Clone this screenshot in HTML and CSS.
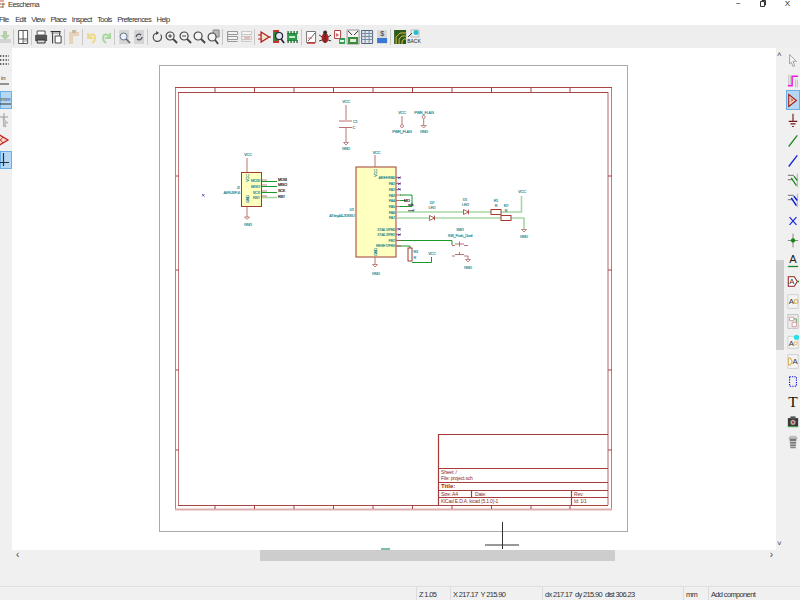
FILE: index.html
```html
<!DOCTYPE html>
<html lang="en">
<head>
    <meta charset="UTF-8">
    <title>Eeschema</title>
    <link rel="stylesheet" href="styles.css">
</head>
<body>
<div class="app">
    <div class="titlebar">
        <svg class="appicon" width="6" height="9" viewBox="0 0 6 9"><path d="M0 1h4M0 4h5M0 7h3" stroke="#c8503c" fill="none"/><path d="M3 3v5" stroke="#5a8a5a"/></svg>
        <span class="apptitle">Eeschema</span>
        <div class="winbtns">
            <span class="winbtn">&minus;</span>
            <svg class="winbtn" width="6" height="7" viewBox="0 0 6 7"><path d="M.5 1.5h4v5h-4zM2 1.500V.5h3.500v4.500h-1" fill="none" stroke="#333"/></svg>
            <span class="winbtn">X</span>
        </div>
    </div>
    <div class="menubar">
        <span class="menu first">File</span>
        <span class="menu">Edit</span>
        <span class="menu">View</span>
        <span class="menu">Place</span>
        <span class="menu">Inspect</span>
        <span class="menu">Tools</span>
        <span class="menu">Preferences</span>
        <span class="menu">Help</span>
    </div>

    <div class="toolbar">
        <svg class="tool first" viewBox="0 0 14 16"><path d="M1 10h12v4H1z" fill="#d4d4d4"/><path d="M5 2h4v4h3L7 11 2 6h3z" fill="#b4d0a6"/></svg>
        <i class="sep"></i>
        <svg class="tool" viewBox="0 0 14 16"><path d="M2.5 1.500h9v13h-9z" fill="#fff" stroke="#555"/><path d="M7 1v9M3 10h8M7 10v4" stroke="#555"/><path d="M8 12h3" stroke="#888"/></svg>
        <i class="sep"></i>
        <svg class="tool" viewBox="0 0 14 16"><path d="M3 2h8v4H3z" fill="#fff" stroke="#555"/><path d="M1 6h12v6H1z" fill="#555"/><path d="M3 11h8v3H3z" fill="#ddd" stroke="#333"/></svg>
        <svg class="tool" viewBox="0 0 14 16"><path d="M1.500 2.500h10M3.500 2.500v12M10.500 2.500v4" stroke="#333" fill="none"/><path d="M2 4h10" stroke="#888"/><path d="M6 7h6v7H6z" fill="#fff" stroke="#444"/></svg>
        <i class="sep"></i>
        <svg class="tool" viewBox="0 0 14 16"><path d="M2 3h10v12H2z" fill="#e6d2b8"/><path d="M5 1h4v3H5z" fill="#c8b89c"/><path d="M6 7h7v8H6z" fill="#eee"/></svg>
        <i class="sep"></i>
        <svg class="tool" viewBox="0 0 14 16"><path d="M3 4v5h5" fill="none" stroke="#ecd98a" stroke-width="2"/><path d="M4 8c2-4 6-3 6 1s-2 4-3 5" fill="none" stroke="#ecd98a" stroke-width="2"/></svg>
        <svg class="tool" viewBox="0 0 14 16"><path d="M11 4v5H6" fill="none" stroke="#a8d8a0" stroke-width="2"/><path d="M10 8c-2-4-6-3-6 1s2 4 3 5" fill="none" stroke="#a8d8a0" stroke-width="2"/></svg>
        <i class="sep"></i>
        <svg class="tool" viewBox="0 0 14 16"><path d="M2 1h10v14H2z" fill="#d4d4d4"/><circle cx="6.500" cy="7.500" r="3.500" fill="#eef" stroke="#678"/><path d="M9 10l4 4" stroke="#567" stroke-width="1.500"/></svg>
        <svg class="tool" viewBox="0 0 14 16"><path d="M2 1h10v14H2z" fill="#d4d4d4"/><path d="M4 8a3 3 0 0 1 5-2M10 8a3 3 0 0 1-5 2" fill="none" stroke="#556" stroke-width="1.300"/></svg>
        <i class="sep"></i>
        <svg class="tool" viewBox="0 0 14 16"><path d="M10.500 5.500a4.200 4.200 0 1 1-3-1.500" fill="none" stroke="#444" stroke-width="1.100"/><path d="M6 2l3 2-3 2z" fill="#444"/></svg>
        <svg class="tool" viewBox="0 0 14 16"><circle cx="6" cy="7" r="4" fill="#f4f4f4" stroke="#444" stroke-width="1.200"/><path d="M9 10l4 4" stroke="#444" stroke-width="1.800"/><path d="M4 7h4M6 5v4" stroke="#444"/></svg>
        <svg class="tool" viewBox="0 0 14 16"><circle cx="6" cy="7" r="4" fill="#f4f4f4" stroke="#444" stroke-width="1.200"/><path d="M9 10l4 4" stroke="#444" stroke-width="1.800"/><path d="M4 7h4" stroke="#444"/></svg>
        <svg class="tool" viewBox="0 0 14 16"><circle cx="6" cy="7" r="4" fill="#f4f4f4" stroke="#444" stroke-width="1.200"/><path d="M9 10l4 4" stroke="#444" stroke-width="1.800"/></svg>
        <svg class="tool" viewBox="0 0 14 16"><path d="M7 1h6v7H7z" fill="#bbb" stroke="#888"/><circle cx="6" cy="8" r="4" fill="#f4f4f4" stroke="#444" stroke-width="1.200"/><path d="M9 11l3 4" stroke="#444" stroke-width="1.800"/></svg>
        <i class="sep"></i>
        <svg class="tool" viewBox="0 0 14 16"><path d="M2.500 2.500h10v3h-10zM2.500 7.500h10v3h-10zM2.500 12.500h10M2.500 2.500v10" fill="#f4f4f4" stroke="#999"/></svg>
        <svg class="tool" viewBox="0 0 14 16"><path d="M2.500 2.500h10v3h-10zM2.500 7.500h10v3h-10zM2.500 12.500h10M2.500 2.500v10" fill="#f4f4f4" stroke="#c8c8c8"/><path d="M5 9h6" stroke="#e08080"/></svg>
        <i class="sep"></i>
        <svg class="tool" viewBox="0 0 14 16"><path d="M4 3l8 5-8 5z" fill="#f6e4d0" stroke="#b02020" stroke-width="1.300"/><path d="M1 6h3M1 10h3M12 8h2" stroke="#b02020"/></svg>
        <svg class="tool" viewBox="0 0 14 16"><path d="M2 1h6v13H2z" fill="#c83030"/><path d="M3 3h4v9H3z" fill="#2a8a3a"/><circle cx="8" cy="7" r="3.500" fill="#dfe8f0" stroke="#223" stroke-width="1.200"/><path d="M10 10l3 4" stroke="#223" stroke-width="1.600"/></svg>
        <svg class="tool" viewBox="0 0 14 16"><path d="M2 4h10v8H2z" fill="#2a9a4a"/><path d="M3 2v3M6 2v3M9 2v3M12 2v3M3 11v3M6 11v3M9 11v3M12 11v3" stroke="#1c6a30" stroke-width="1.300"/><path d="M4 7h6v2H4z" fill="#cfe8cf"/></svg>
        <i class="sep"></i>
        <svg class="tool" viewBox="0 0 14 16"><path d="M2.500 2.500h9v11h-9z" fill="#fff" stroke="#777"/><path d="M4 12l7-8" stroke="#666"/><path d="M3 14h8" stroke="#c03030" stroke-width="1.500"/><path d="M4 9h4" stroke="#d06060"/></svg>
        <svg class="tool" viewBox="0 0 14 16"><ellipse cx="7" cy="9" rx="3.500" ry="5" fill="#b02020"/><circle cx="7" cy="3.500" r="2" fill="#333"/><path d="M1 6l3 2M13 6l-3 2M1 12l3-1M13 12l-3-1" stroke="#333"/><path d="M7 5v9" stroke="#333"/></svg>
        <svg class="tool" viewBox="0 0 14 16"><path d="M2.500 1.500h6v8h-6z" fill="#fff" stroke="#b04040"/><path d="M4 4l3 2-3 2z" fill="#d06060"/><path d="M7 9h6v6H7z" fill="#3a9a5a"/><path d="M8 11h4v2H8z" fill="#dfd"/></svg>
        <svg class="tool" viewBox="0 0 14 16"><path d="M1 1h12v14H1z" fill="#f4f4f4" stroke="#999"/><path d="M2 2l4 4M12 2L8 6" stroke="#333"/><path d="M2 8h10v7H2z" fill="#3a8a3a"/><path d="M4 10h6v3H4z" fill="#dfeedd"/></svg>
        <svg class="tool" viewBox="0 0 14 16"><path d="M1.500 1.500h11v13h-11z" fill="#dfe6f0" stroke="#567"/><path d="M1 4.500h12M1 7.500h12M1 10.500h12M5 2v12M9 2v12" stroke="#7a8ba0"/></svg>
        <svg class="tool" viewBox="0 0 14 16"><path d="M2 1h10v14H2z" fill="#d8d8d8"/><text x="7" y="7" class="icon-text">$</text><path d="M2 9h10v5H2z" fill="#3a78d8"/></svg>
        <i class="sep"></i>
        <svg class="tool" viewBox="0 0 14 16"><path d="M1 1h12v14H1z" fill="#2e5a1e"/><path d="M3 15V8l4-4h6M6 15v-5l3-3h4M9 15v-3l2-2h2" stroke="#d8b840" fill="none"/></svg>
        <span class="tool backbtn">
            <svg viewBox="0 0 14 9" width="14" height="9"><path d="M4 1h8v7H4z" fill="#eee" stroke="#bbb"/><circle cx="9" cy="3.500" r="2.500" fill="#20c0d0"/><path d="M5 4L1 8" stroke="#444"/></svg>
            <span class="backlabel">BACK</span>
        </span>
    </div>

    <div class="main">
        <div class="lefttool">
            <div class="ltool"><svg viewBox="0 0 14 16"><path d="M0 4h9M0 8h9M0 12h9" stroke="#333" stroke-dasharray="1.300 1.500" stroke-width="1.300"/></svg></div>
            <div class="ltool"><svg viewBox="0 0 14 16"><text x="1" y="8" class="unit-text">in</text><path d="M0 12h9" stroke="#333"/></svg></div>
            <div class="ltool active"><svg viewBox="0 0 14 16"><text x="0.5" y="9" class="unit-text">mm</text><path d="M0 12h11" stroke="#333"/></svg></div>
            <div class="ltool"><svg viewBox="0 0 14 16"><path d="M4 1v14M0 5h8" stroke="#999"/><path d="M3 6l5 5H5l1 4-2-1z" fill="#ccc" stroke="#999" stroke-width=".5"/></svg></div>
            <div class="ltool"><svg viewBox="0 0 14 16"><path d="M-2 2l10 6-10 6z" fill="#f4d8c8" stroke="#c02020" stroke-width="1.300"/><path d="M-2 5l5 6M-2 11l5-6" stroke="#c02020" stroke-width=".8"/></svg></div>
            <div class="ltool active"><svg viewBox="0 0 14 16"><path d="M3.500 1v13M-1 10.500h10" stroke="#234" stroke-width="1.200"/></svg></div>
        </div>

        <div class="center">
            <svg class="sheet" viewBox="12 48 764 502" width="764" height="502">
                <!-- page + frame -->
                <rect class="page" x="159.5" y="65.5" width="468" height="466"/>
                <path class="frame-light" d="M175.5 87v423M178.5 92v413M611.5 87v423"/>
                <path class="frame-soft" d="M608 92v413M175 509.500h437"/>
                <path class="frame-dark" d="M175 87.500h437M178 92.500h430M178 505.500h430"/>
                <path class="tick" d="M215 87v5M254.5 87v5M294 87v5M333.5 87v5M373 87v5M412.5 87v5M452 87v5M491.5 87v5M531 87v5M570 87v5"/>
                <path class="tick" d="M215 505v4M254.5 505v4M294 505v4M333.5 505v4M373 505v4M412.5 505v4M452 505v4M491.5 505v4M531 505v4M570 505v4"/>
                <path class="tick" d="M176 176h3M176 270h3M176 370h3M176 450h3M608 176h4M608 270h4M608 370h4M608 450h4"/>

                <!-- title block -->
                <path class="tb" d="M438.5 505V434.500H608M438.5 468.500H608M438.5 482.500H608M438.5 490.500H608M438.5 497.500H608M471.5 490.500v7M571.5 490.500V505"/>
                <text class="tb-t" x="441" y="473.5">Sheet: /</text>
                <text class="tb-t" x="441" y="479.5">File: project.sch</text>
                <text class="tb-b" x="441" y="488">Title:</text>
                <text class="tb-t" x="441" y="495.5">Size: A4</text>
                <text class="tb-t" x="475" y="495.5">Date:</text>
                <text class="tb-t" x="574" y="495.5">Rev:</text>
                <text class="tb-t" x="441" y="502.5">KiCad E.D.A.  kicad (5.1.0)-1</text>
                <text class="tb-t" x="574" y="502.5">Id: 1/1</text>

                <!-- C1 -->
                <path class="pin" d="M346 105v15M339 121h13M339 127.500h13M346 128v14"/>
                <path class="gnd" d="M343.5 142.500h5l-2.500 2.500z"/>
                <text class="lbl m" x="346" y="103">VCC</text>
                <text class="lbl m" x="346" y="150">GND</text>
                <text class="lbl" x="353" y="123">C1</text>
                <text class="lbl" x="352.5" y="128.5">C</text>

                <!-- power flags -->
                <path class="pin" d="M402 116v8M423.700 119v6"/>
                <circle class="flag" cx="402" cy="126" r="1.500"/>
                <circle class="flag" cx="423.700" cy="117" r="1.500"/>
                <path class="gnd" d="M421.200 125.500h5l-2.500 2.500z"/>
                <text class="lbl m" x="402" y="113.5">VCC</text>
                <text class="lbl m" x="402" y="133">PWR_FLAG</text>
                <text class="lbl m" x="424" y="113.5">PWR_FLAG</text>
                <text class="lbl m" x="424" y="133">GND</text>

                <!-- AVR-ISP-6 -->
                <rect class="ic" x="241.5" y="172.5" width="20" height="34"/>
                <path class="pin" d="M247 158v14M247 207v10"/>
                <path class="gnd" d="M244.500 217h5l-2.500 2.500z"/>
                <path class="wire" d="M262 181.500h15M262 186.500h15M262 192.500h15"/>
                <path class="wire-soft" d="M262 197.500h15"/>
                <path class="stub" d="M262 180h5M262 185h5M262 191h5M262 196h5"/>
                <text class="lbl m" x="248" y="156">VCC</text>
                <text class="lbl m" x="248" y="226">GND</text>
                <text class="lbl e" x="240" y="189">J1</text>
                <text class="lbl e" x="240" y="193.5">AVR-ISP-6</text>
                <text class="lbl m" x="247" y="179.5" transform="rotate(-90 247 178)">VCC</text>
                <text class="lbl m" x="247" y="200.5" transform="rotate(-90 247 199)">GND</text>
                <text class="lbl e" x="260" y="182">MOSI</text>
                <text class="lbl e" x="260" y="188">MISO</text>
                <text class="lbl e" x="260" y="193.5">SCK</text>
                <text class="lbl e" x="260" y="199">RST</text>
                <text class="net" x="278" y="180.5">MOSI</text>
                <text class="net" x="278" y="186">MISO</text>
                <text class="net" x="278" y="192">SCK</text>
                <text class="net" x="278" y="197.5">RST</text>
                <path class="nc" d="M202 194l2.500 2.500M204.500 194l-2.500 2.500"/>

                <!-- ATtiny44 -->
                <rect class="ic" x="356" y="167" width="40" height="90"/>
                <path class="pin" d="M375 155v12M375 257v7"/>
                <path class="pin" d="M396 177.500h5M396 183.500h5M396 189.500h5M396 195h5M396 200.500h5M396 206.500h5M396 229h5M396 234.500h5"/>
                <path class="gnd" d="M372.500 264.500h5l-2.500 2.500z"/>
                <path class="nc" d="M398 176.500l2.500 2.500M400.500 176.500l-2.500 2.500M398 182.500l2.500 2.500M400.500 182.500l-2.500 2.500M398 188l2.500 2.500M400.500 188l-2.500 2.500M398 228l2.500 2.500M400.500 228l-2.500 2.500M398 233.500l2.500 2.500M400.500 233.500l-2.500 2.500"/>
                <text class="lbl m" x="376.5" y="153.5">VCC</text>
                <text class="lbl m" x="376" y="274.5">GND</text>
                <text class="lbl e" x="354" y="211">U1</text>
                <text class="lbl e" x="354.5" y="216.5">ATtiny44-20SSU</text>
                <text class="lbl m" x="375.5" y="174.5" transform="rotate(-90 375.500 173)">VCC</text>
                <text class="lbl m" x="375.5" y="253.5" transform="rotate(-90 375.500 252)">GND</text>
                <text class="lbl e" x="395" y="179">AREF/PA0</text>
                <text class="lbl e" x="395" y="185">PA1</text>
                <text class="lbl e" x="395" y="190.5">PA2</text>
                <text class="lbl e" x="395" y="196.5">PA3</text>
                <text class="lbl e" x="395" y="202">PA4</text>
                <text class="lbl e" x="395" y="207.5">PA5</text>
                <text class="lbl e" x="395" y="213.5">PA6</text>
                <text class="lbl e" x="395" y="219">PA7</text>
                <text class="lbl e" x="395" y="230.5">XTAL1/PB0</text>
                <text class="lbl e" x="395" y="236">XTAL2/PB1</text>
                <text class="lbl e" x="395" y="241.5">PB2</text>
                <text class="lbl e" x="395" y="247">RESET/PB3</text>

                <!-- nets on PA3..PA5 -->
                <path class="wire" d="M400 195h12v11.500h-12M400 200.500h5"/>
                <text class="net" x="404" y="201.5">MO</text>
                <text class="net" x="408" y="206">sck</text>
                <text class="net" x="408" y="211.5">scal</text>

                <!-- LED rows -->
                <path class="wire-soft" d="M397 212h124.500v-16M397 218h127v11"/>
                <path class="diode" d="M429.5 215.500l5 2.500-5 2.500zM434.500 215.500v5"/>
                <path class="diode" d="M463.5 209.500l5 2.500-5 2.500zM468.500 209.500v5"/>
                <rect class="res" x="491" y="209.5" width="10" height="5"/>
                <rect class="res" x="501" y="215.5" width="10" height="5"/>
                <path class="gnd" d="M521.5 229.500h5l-2.500 2.500z"/>
                <text class="lbl m" x="432" y="204">D2</text>
                <text class="lbl m" x="432" y="209">LED</text>
                <text class="lbl m" x="465" y="200.5">D1</text>
                <text class="lbl m" x="465.5" y="206">LED</text>
                <text class="lbl m" x="496" y="201.5">R1</text>
                <text class="lbl m" x="496" y="206.5">R</text>
                <text class="lbl m" x="506" y="207">R2</text>
                <text class="lbl m" x="506" y="212">R</text>
                <text class="lbl m" x="522" y="192.5">VCC</text>
                <text class="lbl m" x="524" y="237.5">GND</text>

                <!-- switch + reset -->
                <path class="wire" d="M397 240.500h55v4.500M397 246h13v2M412 262.500h19.500V257"/>
                <path class="pin" d="M396 240.500h5M396 246h5"/>
                <rect class="res" x="408" y="248" width="4" height="13"/>
                <path class="pin" d="M455 244h9M459.500 241.500v5M455 254.500h9M459.500 252v2.500M452 245.500h3M464 245.500h4M452 256h3M464 256h4M468 256v3"/>
                <path class="gnd" d="M465.5 259.500h5l-2.500 2.500z"/>
                <text class="lbl m" x="460" y="231">SW1</text>
                <text class="lbl m" x="460" y="237">SW_Push_Dual</text>
                <text class="lbl m" x="468" y="269">GND</text>
                <text class="lbl m" x="432" y="254.5">VCC</text>
                <text class="lbl" x="413.5" y="253">R3</text>
                <text class="lbl" x="413.5" y="259">R</text>

                <!-- cursor + bit of a part below the sheet -->
                <path class="cross" d="M502.5 522v27M485 545h34"/>
                <path class="blob" d="M381 549h9"/>
            </svg>
            <div class="hscroll">
                <span class="harrow left">&lsaquo;</span>
                <div class="hthumb"></div>
                <span class="harrow right">&rsaquo;</span>
            </div>
        </div>

        <div class="vscroll">
            <span class="varrow">&#708;</span>
            <div class="vthumb"></div>
            <span class="varrow bottom">&#709;</span>
        </div>

        <div class="righttool">
            <div class="rtool"><svg viewBox="0 0 14 18"><path d="M3 2l8 8H7l2 5-2 1-2-5-2 2z" fill="#f4f4f4" stroke="#999"/></svg></div>
            <div class="rtool"><svg viewBox="0 0 14 18"><path d="M1 15h5V4h7" fill="none" stroke="#f020e0" stroke-width="1.800"/><path d="M2 2v12M4 3v10M10 8v9M12 8v9" stroke="#bbb"/></svg></div>
            <div class="rtool active"><svg viewBox="0 0 14 18"><path d="M2 2l9 7-9 7z" fill="#f6d8c0" stroke="#a02020" stroke-width="1.300"/><path d="M4 6l3 4M4 11l3-4" stroke="#c04040" stroke-width=".8"/></svg></div>
            <div class="rtool"><svg viewBox="0 0 14 18"><path d="M7 1v9M2 10h10M4 13h6M6 16h2" stroke="#701818" stroke-width="1.300"/></svg></div>
            <div class="rtool"><svg viewBox="0 0 14 18"><path d="M2 16L12 3" stroke="#208820" stroke-width="1.500"/></svg></div>
            <div class="rtool"><svg viewBox="0 0 14 18"><path d="M2 16L12 3" stroke="#1020d8" stroke-width="1.500"/></svg></div>
            <div class="rtool"><svg viewBox="0 0 14 18"><path d="M1 3h7M1 8h6" stroke="#888" stroke-width="1.300"/><path d="M12 1v16" stroke="#aaa"/><path d="M5 6l6 9M8 4l4 5" stroke="#208820" stroke-width="1.500"/></svg></div>
            <div class="rtool"><svg viewBox="0 0 14 18"><path d="M1 3h7M1 8h6" stroke="#888" stroke-width="1.300"/><path d="M12 1v16" stroke="#aaa"/><path d="M5 6l6 9M8 4l4 5" stroke="#1020d8" stroke-width="1.800"/></svg></div>
            <div class="rtool"><svg viewBox="0 0 14 18"><path d="M3 5l8 9M11 5l-8 9" stroke="#1020d8" stroke-width="1.300"/></svg></div>
            <div class="rtool"><svg viewBox="0 0 14 18"><path d="M7 1v16M1 9h12" stroke="#777"/><circle cx="7" cy="9" r="2.500" fill="#108810"/></svg></div>
            <div class="rtool"><svg viewBox="0 0 14 18"><text x="7" y="12" class="big-text">A</text><path d="M1 16h12" stroke="#208820" stroke-width="1.500"/></svg></div>
            <div class="rtool"><svg viewBox="0 0 14 18"><path d="M1.500 3.500h7l3.500 5.500-3.500 5.500h-7z" fill="#fff" stroke="#902020" stroke-width="1.200"/><text x="5.500" y="12" class="mid-text">A</text><path d="M12 9h2" stroke="#208820" stroke-width="1.500"/></svg></div>
            <div class="rtool"><svg viewBox="0 0 14 18"><path d="M1 1h12v16H1z" fill="#f4f4f4" stroke="#ccc"/><text x="5" y="12" class="mid-text">A</text><circle cx="10.500" cy="9" r="2.200" fill="#fff" stroke="#d8a848" stroke-width="1.200"/></svg></div>
            <div class="rtool"><svg viewBox="0 0 14 18"><path d="M1 1h12v16H1z" fill="#f0eded" stroke="#bbb"/><path d="M3 4h5v4H3zM6 10h5v5H6z" fill="#fff" stroke="#d09090"/><path d="M8 6h3v4" fill="none" stroke="#50a050"/></svg></div>
            <div class="rtool"><svg viewBox="0 0 14 18"><path d="M1 3h12v14H1z" fill="#f4f4f4" stroke="#ccc"/><text x="5" y="14" class="mid-text">A</text><circle cx="10" cy="11" r="1.800" fill="#fff" stroke="#d8a848"/><circle cx="11" cy="4" r="3" fill="#20e0e8"/></svg></div>
            <div class="rtool"><svg viewBox="0 0 14 18"><path d="M1 1h12v16H1z" fill="#f4f4f4" stroke="#ccc"/><path d="M2 5h2l2 4-2 4H2z" fill="#fff" stroke="#d8a848" stroke-width="1.200"/><text x="9.500" y="12.500" class="mid-text">A</text></svg></div>
            <div class="rtool"><svg viewBox="0 0 14 18"><rect x="3" y="3.500" width="8" height="11" fill="none" stroke="#1010e0" stroke-width="1.300" stroke-dasharray="1.500 1.300"/></svg></div>
            <div class="rtool"><svg viewBox="0 0 14 18"><text x="7" y="15" class="t-text">T</text></svg></div>
            <div class="rtool"><svg viewBox="0 0 14 18"><path d="M1 5h12v10H1z" fill="#3a3a3a"/><path d="M4 3h6v3H4z" fill="#555"/><circle cx="7" cy="10" r="3" fill="#aaa"/><circle cx="7" cy="10" r="1.300" fill="#d02020"/><path d="M1 15h12" stroke="#40a040" stroke-width="1.300"/></svg></div>
            <div class="rtool"><svg viewBox="0 0 14 18"><path d="M3 3h8" stroke="#bbb" stroke-width="1.300"/><path d="M2 5h10" stroke="#888" stroke-width="1.300"/><path d="M3 6h8l-1 11H4z" fill="#777"/><path d="M3 9h8M3 12h8M4 15h6" stroke="#ddd"/></svg></div>
        </div>
    </div>

    <div class="spacer"></div>

    <div class="statusbar">
        <span class="cell c-msg"></span>
        <span class="cell c-zoom">Z 1.05</span>
        <span class="cell c-xy">X 217.17&nbsp; Y 215.90</span>
        <span class="cell c-d">dx 217.17&nbsp; dy 215.90&nbsp; dist 306.23</span>
        <span class="cell c-unit">mm</span>
        <span class="cell c-tool">Add component</span>
    </div>
</div>
</body>
</html>
```

FILE: styles.css
```css
body {
    margin: 0;
    overflow: hidden;
    background-color: #f0f0f0;
    font-family: "Liberation Sans", Arial, sans-serif;
    color: #222;
}
.app {
    width: 800px;
    height: 600px;
    display: flex;
    flex-direction: column;
    overflow: hidden;
}

/* title + menu */
.titlebar {
    height: 13px;
    background-color: #fff;
    display: flex;
    align-items: flex-start;
    font-size: 7.5px;
    line-height: 9px;
    letter-spacing: -0.55px;
}
.appicon {
    margin-right: 2px;
}
.apptitle {
    color: #333;
}
.winbtns {
    margin-left: auto;
    display: flex;
    align-items: flex-start;
    gap: 19px;
    padding-right: 10px;
    letter-spacing: 0;
}
.winbtn {
    font-size: 8px;
    line-height: 8px;
}
.menubar {
    height: 12px;
    background-color: #fff;
    display: flex;
    align-items: center;
    gap: 5.5px;
    font-size: 7.5px;
    letter-spacing: -0.6px;
    padding-left: 1px;
    color: #333;
}
.menu.first {
    margin-left: -2px;
    margin-right: 1px;
}

/* top toolbar */
.toolbar {
    height: 23px;
    background-color: #eeeeee;
    display: flex;
    align-items: center;
    flex: none;
}
.tool {
    width: 14.2px;
    height: 16px;
    flex: none;
    display: block;
}
.tool.first {
    margin-left: -2px;
}
.sep {
    width: 4px;
    height: 16px;
    flex: none;
    background: linear-gradient(#c8c8c8, #c8c8c8) no-repeat 1px 0 / 1px 100%;
}
.icon-text {
    font-size: 7px;
    text-anchor: middle;
    fill: #333;
}
.backbtn {
    display: flex;
    flex-direction: column;
    align-items: center;
}
.backlabel {
    font-size: 5px;
    line-height: 7px;
}

/* middle */
.main {
    height: 513px;
    flex: none;
    display: flex;
}
.lefttool {
    width: 12px;
    flex: none;
    padding-top: 2px;
    display: flex;
    flex-direction: column;
    overflow: hidden;
}
.ltool {
    height: 20px;
    display: flex;
    align-items: center;
    flex: none;
}
.ltool svg {
    width: 14px;
    height: 16px;
    flex: none;
    overflow: visible;
}
.ltool.active {
    background-color: #b5d7f5;
    box-shadow: inset 0 0 0 1px #6aaee8;
    height: 18px;
    margin: 1px 0;
}
.unit-text {
    font-size: 6px;
    fill: #333;
}
.center {
    width: 764px;
    flex: none;
    display: flex;
    flex-direction: column;
}
.sheet {
    display: block;
    background-color: #fff;
    flex: none;
}
.hscroll {
    height: 11px;
    flex: none;
    display: flex;
    align-items: stretch;
    position: relative;
}
.hthumb {
    width: 355px;
    margin-left: 248px;
    background-color: #cdcdcd;
}
.harrow {
    position: absolute;
    top: 0;
    font-size: 10px;
    line-height: 10px;
    color: #444;
}
.harrow.left {
    left: 4px;
}
.harrow.right {
    right: 3px;
}
.vscroll {
    width: 9px;
    flex: none;
    position: relative;
}
.varrow {
    position: absolute;
    left: 1px;
    top: 3px;
    font-size: 8px;
    line-height: 8px;
    color: #444;
}
.varrow.bottom {
    top: auto;
    bottom: 13px;
}
.vthumb {
    width: 8px;
    height: 90px;
    margin-top: 212px;
    background-color: #cdcdcd;
}
.righttool {
    width: 15px;
    flex: none;
    padding-top: 2px;
    padding-left: 1px;
    box-sizing: border-box;
    display: flex;
    flex-direction: column;
}
.rtool {
    height: 20.1px;
    display: flex;
    align-items: center;
    justify-content: center;
    flex: none;
}
.rtool svg {
    width: 12px;
    height: 17px;
    overflow: visible;
}
.rtool.active {
    background-color: #b5d7f5;
    box-shadow: inset 0 0 0 1px #6aaee8;
}
.big-text {
    font-size: 13px;
    text-anchor: middle;
    fill: #222;
}
.mid-text {
    font-size: 9px;
    text-anchor: middle;
    fill: #333;
}
.t-text {
    font-family: "Liberation Serif", serif;
    font-size: 18px;
    text-anchor: middle;
    fill: #111;
}

/* schematic */
.sheet text {
    font-family: "Liberation Sans", Arial, sans-serif;
}
.page {
    fill: none;
    stroke: #aaaaaa;
}
.frame-light {
    fill: none;
    stroke: #c87878;
}
.frame-soft {
    fill: none;
    stroke: #e0b0b0;
    stroke-width: 2;
}
.frame-dark {
    fill: none;
    stroke: #a84444;
}
.tick {
    stroke: #a44;
    fill: none;
}
.tb {
    fill: none;
    stroke: #a83a3a;
    stroke-width: 1.2;
}
.tb-t {
    font-size: 5px;
    letter-spacing: -0.2px;
    fill: #8c2c2c;
}
.tb-b {
    font-size: 6px;
    font-weight: bold;
    fill: #8c2c2c;
}
.pin {
    fill: none;
    stroke: #a85050;
    stroke-width: .8;
}
.gnd {
    fill: #fff;
    stroke: #a85050;
    stroke-width: .7;
}
.flag {
    fill: #fff;
    stroke: #a85050;
    stroke-width: .7;
}
.ic {
    fill: #ffffc0;
    stroke: #a03c30;
}
.lbl {
    font-size: 3.8px;
    letter-spacing: -0.2px;
    fill: #1f8a90;
    stroke: #1f8a90;
    stroke-width: .15;
}
.m {
    text-anchor: middle;
}
.e {
    text-anchor: end;
}
.net {
    font-size: 3.8px;
    letter-spacing: -0.2px;
    fill: #111;
    stroke: #111;
    stroke-width: .15;
}
.wire {
    fill: none;
    stroke: #1a9a2a;
}
.wire-soft {
    fill: none;
    stroke: #a6d8a6;
    stroke-width: 1.6;
}
.stub {
    stroke: #a85050;
    stroke-width: .7;
}
.nc {
    fill: none;
    stroke: #2a2aa8;
    stroke-width: .7;
}
.diode {
    fill: #fff;
    stroke: #a03c30;
    stroke-width: .8;
}
.res {
    fill: #fff;
    stroke: #a03c30;
}
.cross {
    stroke: #333;
    fill: none;
}
.blob {
    stroke: #7ac0a8;
    stroke-width: 2;
}

/* bottom */
.spacer {
    height: 25px;
    flex: none;
}
.statusbar {
    height: 14px;
    flex: none;
    display: flex;
    font-size: 7.5px;
    letter-spacing: -0.65px;
    line-height: 16px;
    border-top: 1px solid #e0e0e0;
    box-sizing: border-box;
    color: #333;
}
.cell {
    display: block;
    box-sizing: border-box;
    border-left: 1px solid #dcdcdc;
    padding-left: 2px;
    white-space: nowrap;
}
.c-msg {
    width: 416px;
    border-left: none;
}
.c-zoom {
    width: 34px;
}
.c-xy {
    width: 92px;
}
.c-d {
    width: 141px;
}
.c-unit {
    width: 25px;
}
.c-tool {
    width: 92px;
}
```
